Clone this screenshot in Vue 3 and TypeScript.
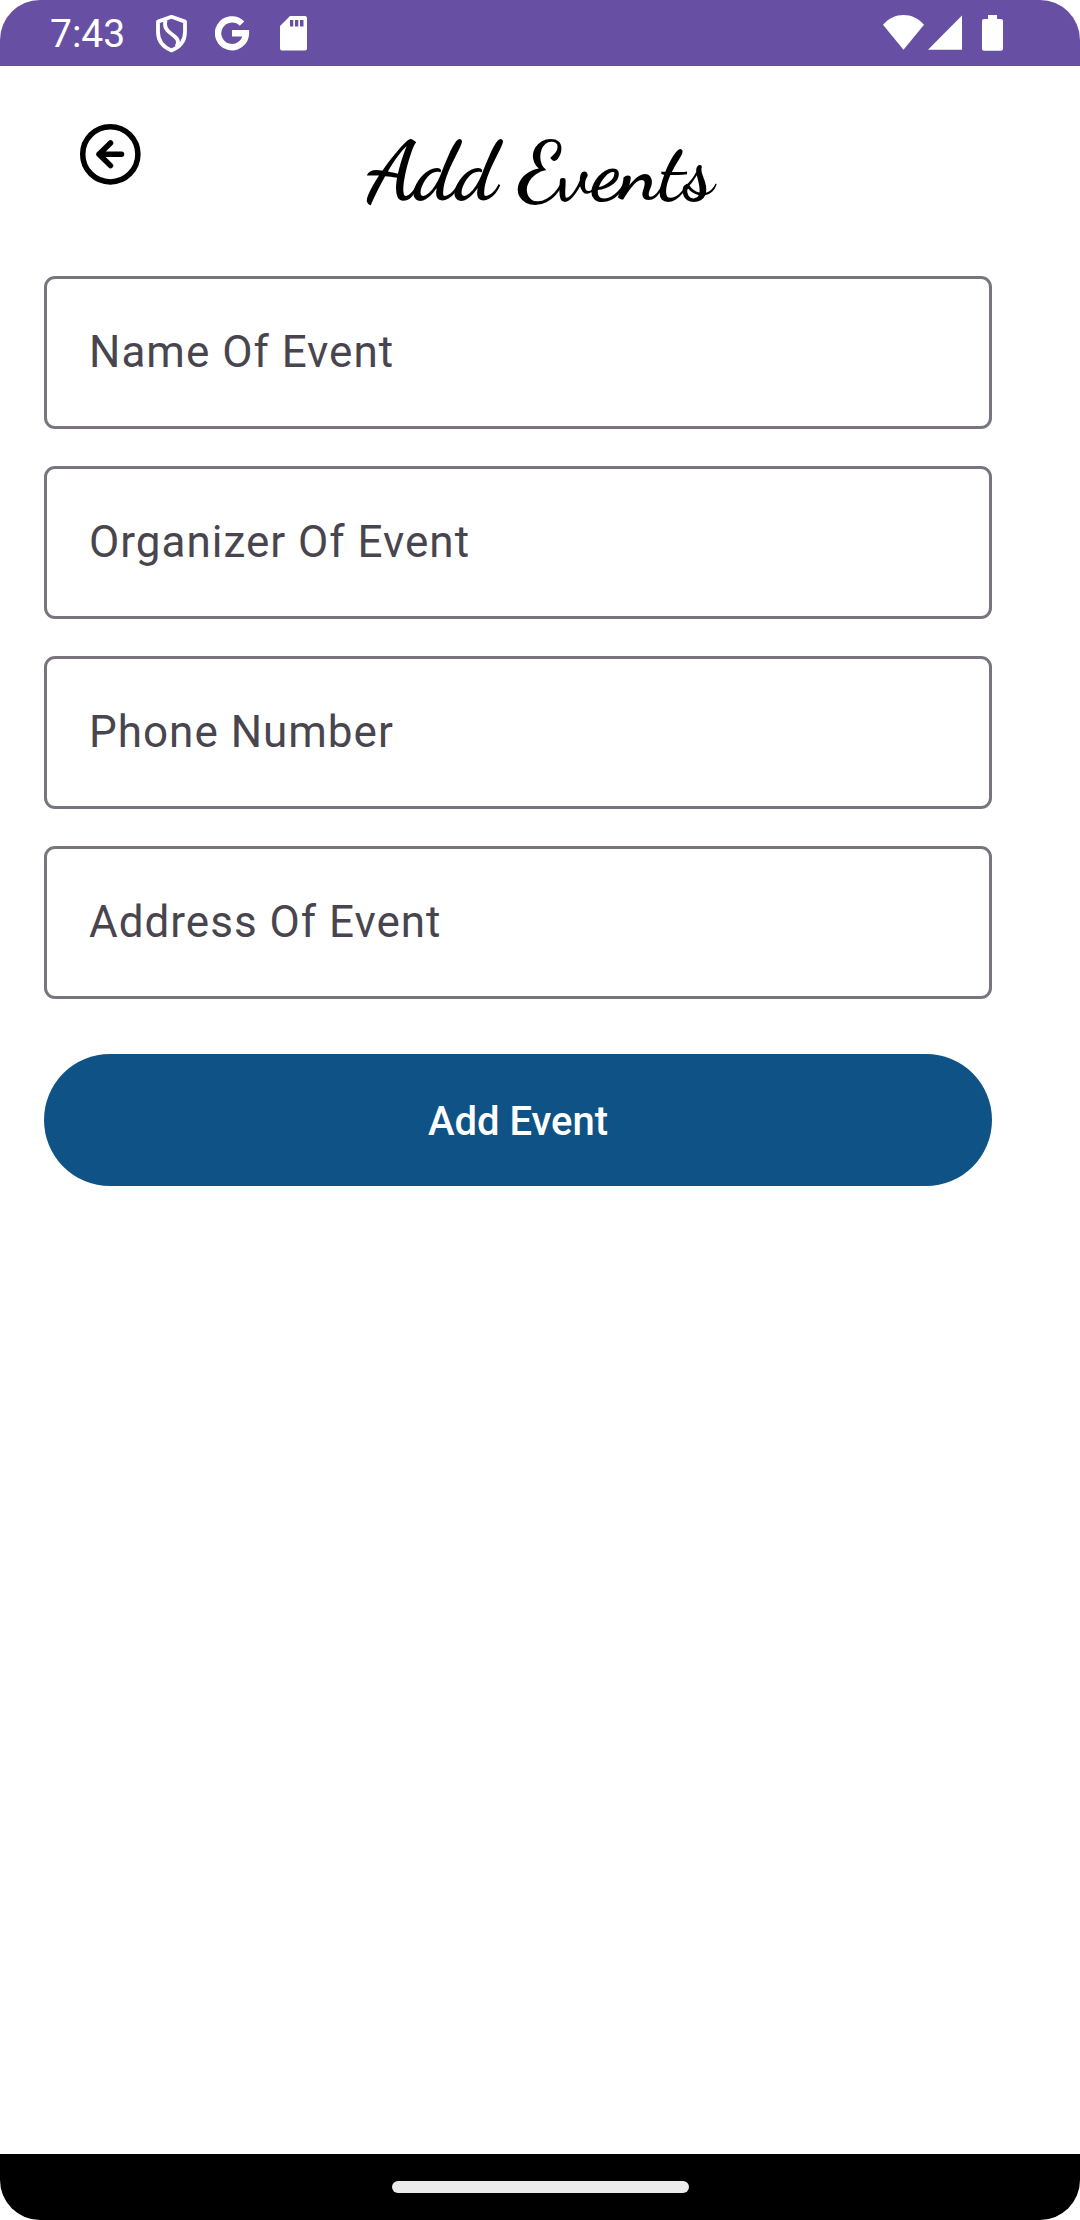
<script setup lang="ts">
import { reactive } from 'vue'

type FieldKey = 'name' | 'organizer' | 'phone' | 'address'

interface Field {
  key: FieldKey
  label: string
  type: string
}

const fields: Field[] = [
  { key: 'name', label: 'Name Of Event', type: 'text' },
  { key: 'organizer', label: 'Organizer Of Event', type: 'text' },
  { key: 'phone', label: 'Phone Number', type: 'tel' },
  { key: 'address', label: 'Address Of Event', type: 'text' },
]

const form = reactive<Record<FieldKey, string>>({
  name: '',
  organizer: '',
  phone: '',
  address: '',
})
</script>

<template>
  <div class="screen">
    <div class="status-bar">
      <span class="time">7:43</span>
      <div class="notifications">
        <svg width="36" height="40" viewBox="0 0 36 40" fill="none" stroke="#fff" stroke-width="3.8" stroke-linejoin="round" aria-hidden="true">
          <path d="M17.5 3.8 31 8.6V19C31 28 26 34 17.5 37.4 9 34 4 28 4 19V8.6Z" />
          <path d="M11.5 7C10 14 12 17 17.5 21 23 24.800 26 28 22.500 33.500" />
        </svg>
        <svg width="36" height="40" viewBox="0 0 36 40" fill="none" stroke="#fff" stroke-width="6.400" aria-hidden="true">
          <path d="M27 10.600A13.900 13.900 0 1 0 30.900 20.200H17" />
        </svg>
        <svg width="36" height="40" viewBox="0 0 36 40" aria-hidden="true">
          <path fill="#fff" fill-rule="evenodd" d="M14 3H29a2 2 0 0 1 2 2V35.500a2 2 0 0 1-2 2H6a2 2 0 0 1-2-2V13ZM14 7V13.500H17.300V7ZM19 7V13.500H22.300V7ZM24 7V13.500H27.500V7Z" />
        </svg>
      </div>
      <div class="system">
        <svg width="42" height="40" viewBox="0 0 42 40" fill="#fff" aria-hidden="true">
          <path d="M0 11.700C11 -1.200 30 -1.200 41 11.700L20.500 36.700Z" />
        </svg>
        <svg width="34" height="40" viewBox="0 0 34 40" fill="#fff" aria-hidden="true">
          <path d="M34 2.500V36.700H0Z" />
        </svg>
        <svg class="battery" width="22" height="40" viewBox="0 0 22 40" fill="#fff" aria-hidden="true">
          <path d="M6 2H15V6H19a2 2 0 0 1 2 2V35.700a2 2 0 0 1-2 2H2a2 2 0 0 1-2-2V8A2 2 0 0 1 2 6H6Z" />
        </svg>
      </div>
    </div>

    <header class="header">
      <button class="back" type="button" aria-label="Back">
        <svg width="66" height="66" viewBox="0 0 66 66" fill="none" stroke="#000" stroke-width="5.500" stroke-linecap="round" stroke-linejoin="round" aria-hidden="true">
          <circle cx="33.300" cy="33.300" r="27.600" />
          <path d="M44.500 33.300H22M33.500 22 22 33.300 33.500 44.600" />
        </svg>
      </button>
      <h1 class="title">Add Events</h1>
    </header>

    <form class="form" @submit.prevent>
      <input
        v-for="field in fields"
        :key="field.key"
        v-model="form[field.key]"
        class="field"
        :type="field.type"
        :name="field.key"
        :placeholder="field.label"
        :aria-label="field.label"
      />
      <button class="submit" type="submit">Add Event</button>
    </form>

    <div class="nav-bar">
      <span class="handle"></span>
    </div>
  </div>
</template>

<style>
body {
  margin: 0;
  background: #fff;
}
</style>

<style scoped>
.screen {
  display: flex;
  flex-direction: column;
  min-height: 100vh;
  overflow: hidden;
  border-radius: 40px;
  background: #fff;
  font-family: Roboto, "Noto Sans", sans-serif;
}

.screen svg {
  display: block;
}

.status-bar {
  display: flex;
  align-items: center;
  height: 66px;
  padding: 0 76px 0 50px;
  background: #6750a4;
  color: #fff;
}

.time {
  padding-top: 2px;
  font-size: 39px;
  line-height: 48px;
}

.notifications {
  display: flex;
  gap: 25px;
  margin-left: 29px;
}

.system {
  display: flex;
  gap: 3px;
  margin-left: auto;
}

.battery {
  margin-left: 17px;
}

.header {
  display: grid;
  grid-template-columns: 88px 1fr 88px;
  align-items: start;
  padding: 44px 66px 54px;
}

.back {
  display: grid;
  place-items: center;
  height: 88px;
  padding: 0;
  border: 0;
  background: none;
  cursor: pointer;
}

.title {
  margin: 12px 0 0;
  color: #000;
  font-family: "Dancing Script", "Liberation Serif", cursive;
  font-size: 83px;
  font-weight: 700;
  line-height: 100px;
  text-align: center;
}

.form {
  display: flex;
  flex: 1;
  flex-direction: column;
  gap: 37px;
  padding: 0 88px 44px 44px;
}

.field {
  box-sizing: border-box;
  width: 100%;
  height: 153px;
  padding: 0 42px 2px;
  border: 3px solid #79747e;
  border-radius: 11px;
  outline: 0;
  background: transparent;
  color: #1c1b1f;
  font-family: inherit;
  font-size: 44px;
  letter-spacing: 1px;
}

.field::placeholder {
  color: #49454f;
  opacity: 1;
}

.submit {
  height: 132px;
  margin-top: 18px;
  padding: 2px 0 0;
  border: 0;
  border-radius: 66px;
  background: #0f5286;
  color: #fff;
  font-family: inherit;
  font-size: 40px;
  font-weight: 500;
  cursor: pointer;
}

.nav-bar {
  display: flex;
  align-items: center;
  justify-content: center;
  height: 66px;
  background: #000;
}

.handle {
  width: 297px;
  height: 12px;
  border-radius: 6px;
  background: #ebebeb;
}
</style>
